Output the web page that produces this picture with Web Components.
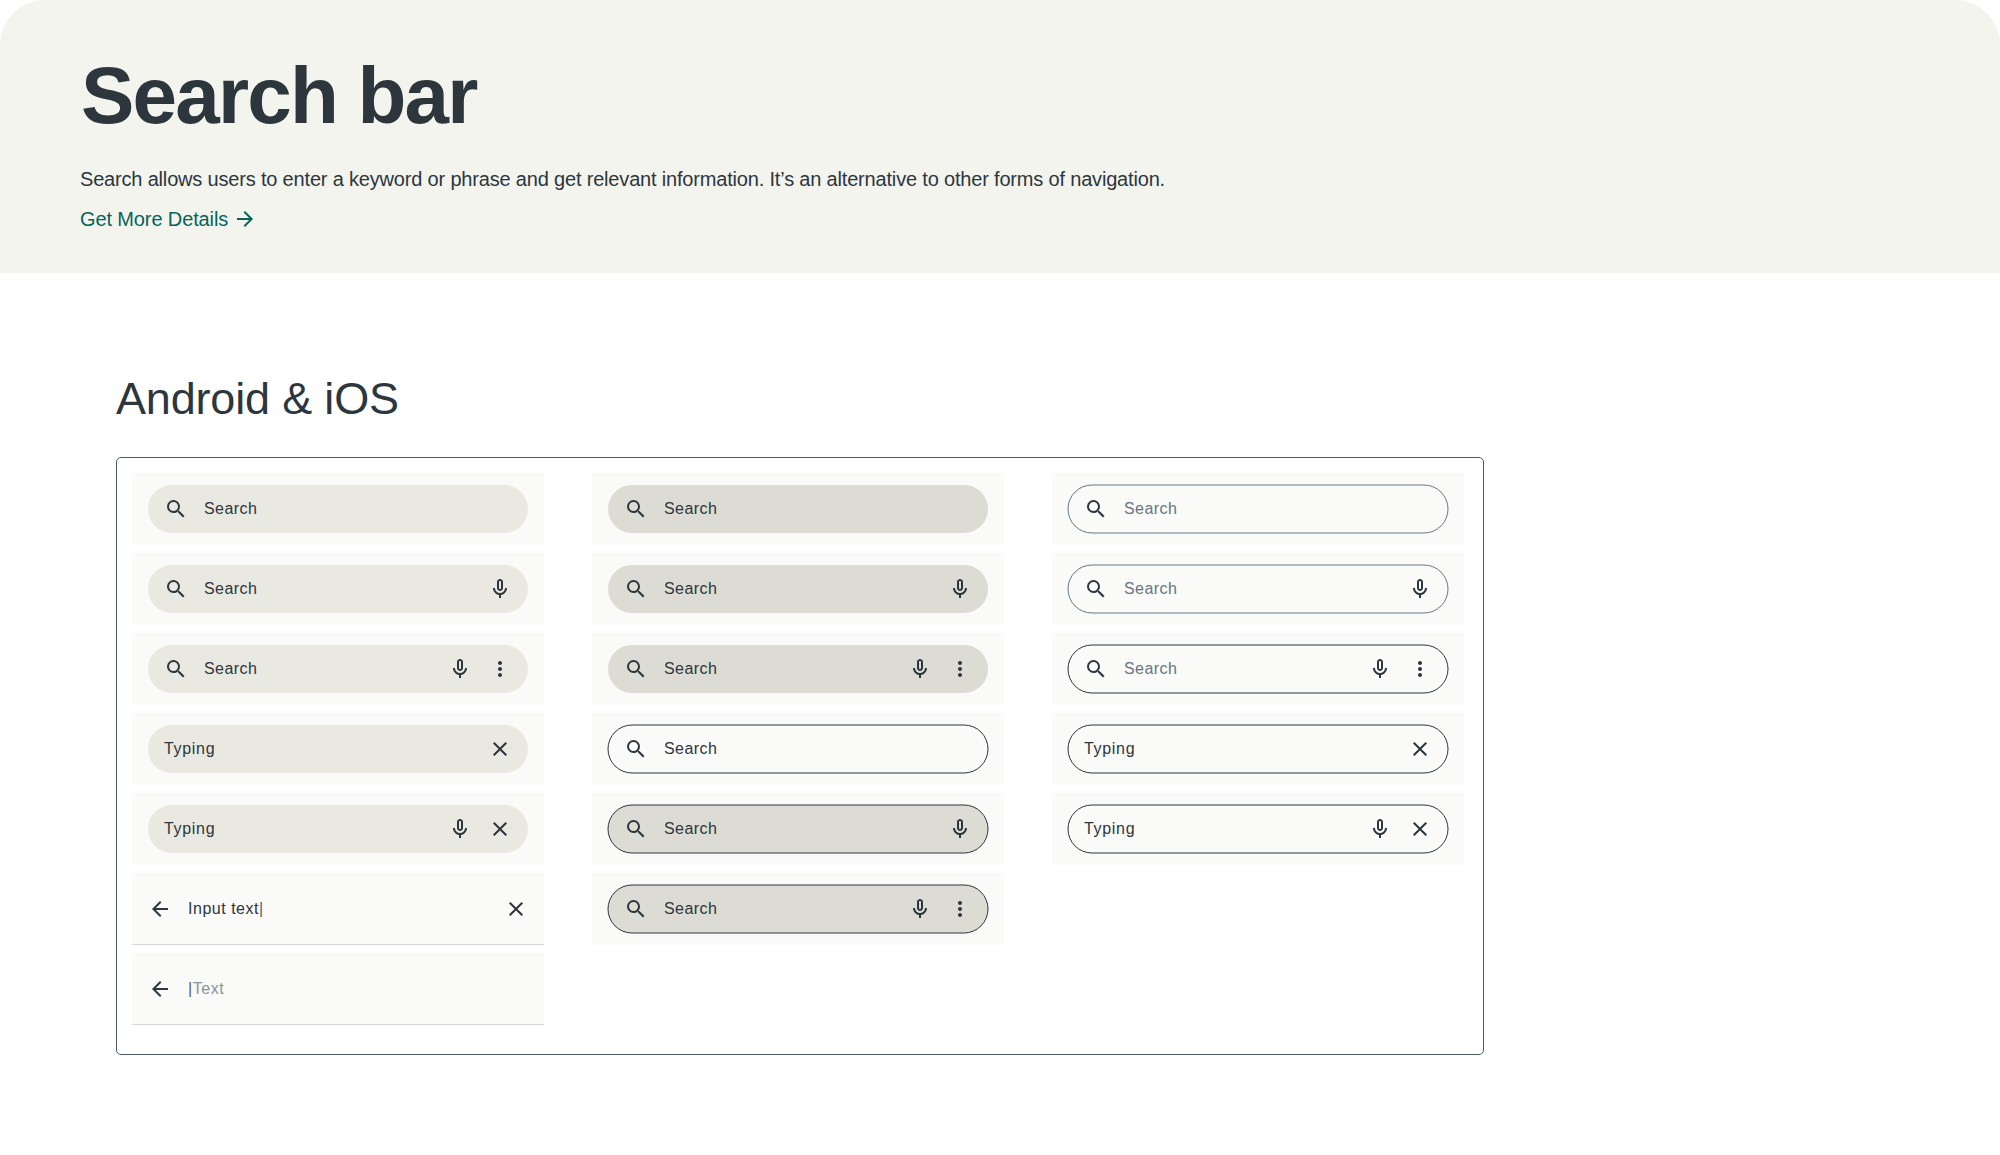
<!DOCTYPE html>
<html lang="en">
<head>
<meta charset="utf-8">
<title>Search bar</title>
<style>
  body { margin: 0; background: #fff; color: #2d363d; font-family: "Liberation Sans", Arial, sans-serif; }
</style>
</head>
<body>
<page-header heading="Search bar">
  Search allows users to enter a keyword or phrase and get relevant information. It’s an alternative to other forms of navigation.
  <span slot="link">Get More Details</span>
</page-header>
<doc-section heading="Android &amp; iOS">
  <spec-column>
    <search-bar lead="search" tone="light">Search</search-bar>
    <search-bar lead="search" tone="light" actions="mic">Search</search-bar>
    <search-bar lead="search" tone="light" actions="mic more">Search</search-bar>
    <search-bar typing tone="light" actions="close">Typing</search-bar>
    <search-bar typing tone="light" actions="mic close">Typing</search-bar>
    <search-view clearable>Input text<span style="color:#59636b">|</span></search-view>
    <search-view><span style="color:#59636b">|</span><span style="color:#89949c">Text</span></search-view>
  </spec-column>
  <spec-column>
    <search-bar lead="search" tone="dark">Search</search-bar>
    <search-bar lead="search" tone="dark" actions="mic">Search</search-bar>
    <search-bar lead="search" tone="dark" actions="mic more">Search</search-bar>
    <search-bar lead="search" outline="strong">Search</search-bar>
    <search-bar lead="search" tone="dark" outline="strong" actions="mic">Search</search-bar>
    <search-bar lead="search" tone="dark" outline="strong" actions="mic more">Search</search-bar>
  </spec-column>
  <spec-column>
    <search-bar lead="search" outline="soft" muted>Search</search-bar>
    <search-bar lead="search" outline="soft" muted actions="mic">Search</search-bar>
    <search-bar lead="search" outline="strong" muted actions="mic more">Search</search-bar>
    <search-bar typing outline="strong" actions="close">Typing</search-bar>
    <search-bar typing outline="strong" actions="mic close">Typing</search-bar>
  </spec-column>
</doc-section>
<script>
const ICONS = {
  search: 'M15.5 14h-.79l-.28-.27A6.471 6.471 0 0 0 16 9.5 6.5 6.5 0 1 0 9.5 16c1.61 0 3.09-.59 4.23-1.57l.27.28v.79l5 4.99L20.49 19l-4.99-5zm-6 0C7.01 14 5 11.99 5 9.5S7.01 5 9.5 5 14 7.01 14 9.5 11.99 14 9.5 14z',
  mic: 'M12 14c1.66 0 3-1.34 3-3V5c0-1.66-1.34-3-3-3S9 3.34 9 5v6c0 1.66 1.34 3 3 3zm-1-9c0-.55.45-1 1-1s1 .45 1 1v6c0 .55-.45 1-1 1s-1-.45-1-1V5zm6 6c0 2.76-2.24 5-5 5s-5-2.24-5-5H5c0 3.53 2.61 6.43 6 6.92V21h2v-3.08c3.39-.49 6-3.39 6-6.92h-2z',
  more: 'M12 8c1.1 0 2-.9 2-2s-.9-2-2-2-2 .9-2 2 .9 2 2 2zm0 2c-1.1 0-2 .9-2 2s.9 2 2 2 2-.9 2-2-.9-2-2-2zm0 6c-1.1 0-2 .9-2 2s.9 2 2 2 2-.9 2-2-.9-2-2-2z',
  close: 'M19 6.41L17.59 5 12 10.59 6.41 5 5 6.41 10.59 12 5 17.59 6.41 19 12 13.41 17.59 19 19 17.59 13.41 12z',
  back: 'M20 11H7.83l5.59-5.59L12 4l-8 8 8 8 1.41-1.41L7.83 13H20v-2z',
  forward: 'M12 4l-1.41 1.41L16.17 11H4v2h12.17l-5.58 5.59L12 20l8-8z'
};

class BaseElement extends HTMLElement {
  connectedCallback() {
    if (!this.shadowRoot) this.attachShadow({ mode: 'open' }).innerHTML = this.render();
  }
}

customElements.define('ui-icon', class extends BaseElement {
  render() {
    return `<style>:host{display:block;flex:none;width:24px;height:24px}svg{display:block}</style>
      <svg width="24" height="24" viewBox="0 0 24 24" fill="currentColor"><path d="${ICONS[this.getAttribute('name')]}"/></svg>`;
  }
});

customElements.define('page-header', class extends BaseElement {
  render() {
    return `<style>
      :host{display:block;box-sizing:border-box;height:273px;padding:50px 80px 0;background:#f3f4ee;border-radius:45px 45px 0 0}
      h1{margin:0;padding-left:1px;font-size:80px;line-height:92px;font-weight:700;letter-spacing:-1.8px}
      p{margin:25px 0 0;font-size:20px;line-height:24px;letter-spacing:-.18px;white-space:nowrap}
      a{display:flex;align-items:center;gap:5px;margin-top:16px;color:#05655a;font-size:20px;line-height:24px;letter-spacing:-.12px}
    </style>
    <h1>${this.getAttribute('heading')}</h1>
    <p><slot></slot></p>
    <a><slot name="link"></slot><ui-icon name="forward"></ui-icon></a>`;
  }
});

customElements.define('doc-section', class extends BaseElement {
  render() {
    return `<style>
      :host{display:block;padding:100px 116px 0}
      h2{margin:0 0 32px;font-size:45px;line-height:52px;font-weight:400;letter-spacing:-.18px}
      div{box-sizing:border-box;display:flex;gap:48px;width:1368px;height:598px;padding:15px;border:1px solid #495966;border-radius:5px}
    </style>
    <h2>${this.getAttribute('heading').replace('&', '&amp;')}</h2>
    <div><slot></slot></div>`;
  }
});

customElements.define('spec-column', class extends BaseElement {
  render() {
    return `<style>:host{display:flex;flex-direction:column;gap:8px;width:412px}</style><slot></slot>`;
  }
});

customElements.define('search-bar', class extends BaseElement {
  render() {
    const fill = { light: '#e9e9e1', dark: '#dcdcd4' }[this.getAttribute('tone')] || 'transparent';
    const stroke = { strong: '#2d363d', soft: '#657682' }[this.getAttribute('outline')];
    const lead = this.getAttribute('lead');
    const actions = (this.getAttribute('actions') || '').split(' ').filter(Boolean);
    return `<style>
      :host{display:block;box-sizing:border-box;height:72px;padding:12px 16px;background:#fafaf8}
      .pill{position:relative;box-sizing:border-box;display:flex;align-items:center;gap:16px;height:48px;padding:0 16px;border-radius:24px;background:${fill}}
      .outline{position:absolute;left:0;top:0;overflow:visible}
      .label{flex:1;font-size:16px;line-height:24px;letter-spacing:${this.hasAttribute('typing') ? '.68px' : '.45px'};color:${this.hasAttribute('muted') ? '#657682' : '#2d363d'}}
    </style>
    <div class="pill">
      ${stroke ? `<svg class="outline" width="380" height="48"><rect width="380" height="48" rx="24" fill="none" stroke="${stroke}"/></svg>` : ''}
      ${lead ? `<ui-icon name="${lead}"></ui-icon>` : ''}
      <span class="label"><slot></slot></span>
      ${actions.map(a => `<ui-icon name="${a}"></ui-icon>`).join('')}
    </div>`;
  }
});

customElements.define('search-view', class extends BaseElement {
  render() {
    return `<style>
      :host{box-sizing:border-box;display:flex;align-items:center;gap:16px;height:72px;padding:1px 16px 0;background:#fafaf8;border-bottom:1px solid #d2d9df}
      .label{flex:1;font-size:16px;line-height:24px;letter-spacing:.52px}
    </style>
    <ui-icon name="back"></ui-icon>
    <span class="label"><slot></slot></span>
    ${this.hasAttribute('clearable') ? '<ui-icon name="close"></ui-icon>' : ''}`;
  }
});
</script>
</body>
</html>
